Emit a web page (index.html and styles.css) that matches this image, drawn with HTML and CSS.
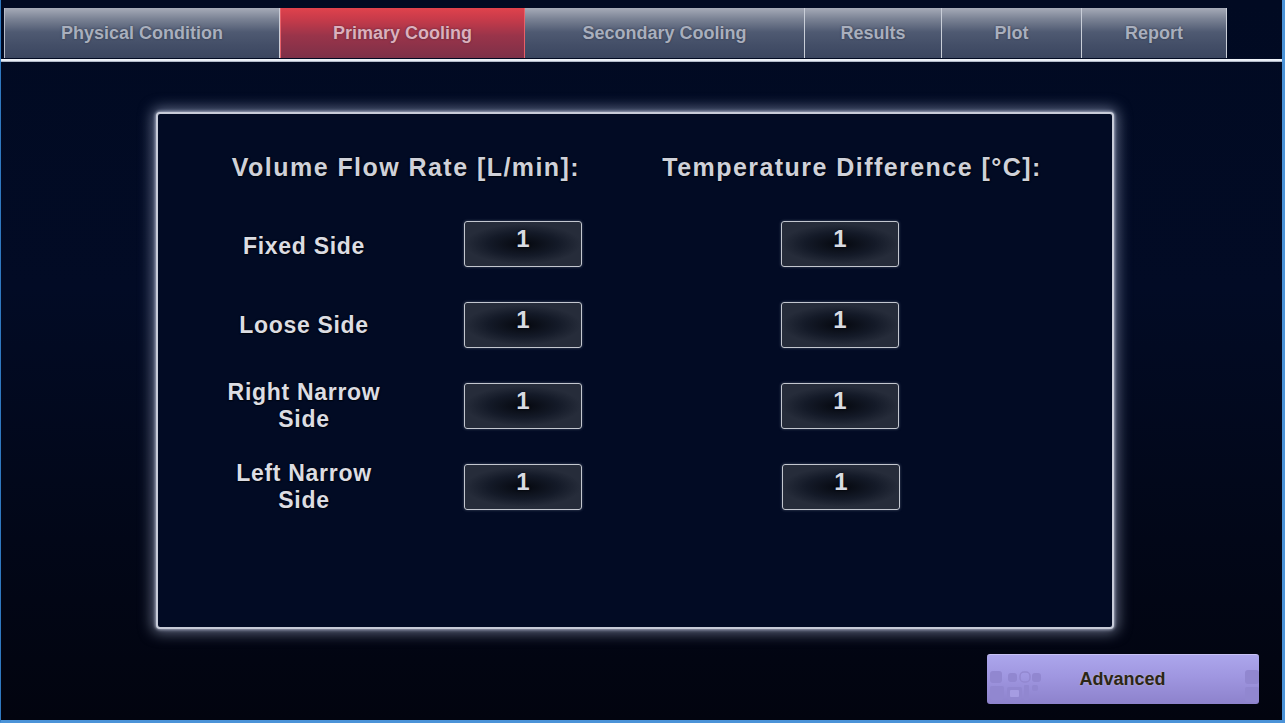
FILE: index.html
```html
<!DOCTYPE html>
<html>
<head>
<meta charset="utf-8">
<link rel="stylesheet" href="styles.css">
</head>
<body>
<div class="app">
  <nav class="tabs">
    <div class="tab w1">Physical Condition</div>
    <div class="tab active w2">Primary Cooling</div>
    <div class="tab w3">Secondary Cooling</div>
    <div class="tab w4">Results</div>
    <div class="tab w5">Plot</div>
    <div class="tab w6">Report</div>
  </nav>
  <div class="rule"></div>
  <main class="content">
    <section class="panel">
      <div class="grid">
        <h2 class="head h-flow">Volume Flow Rate [L/min]:</h2>
        <h2 class="head h-temp">Temperature Difference [°C]:</h2>

        <div class="label first">Fixed Side</div>
        <div class="box">1</div>
        <div class="box c3">1</div>

        <div class="label">Loose Side</div>
        <div class="box">1</div>
        <div class="box c3">1</div>

        <div class="label">Right Narrow<br>Side</div>
        <div class="box">1</div>
        <div class="box c3">1</div>

        <div class="label">Left Narrow<br>Side</div>
        <div class="box">1</div>
        <div class="box c3 nudge">1</div>
      </div>
    </section>
    <div class="actions">
      <button class="advanced">
        <svg class="deco-l" width="56" height="34" viewBox="0 0 56 34">
          <rect x="2" y="2" width="12" height="12" rx="3" />
          <rect x="20" y="4" width="9" height="9" rx="3" />
          <rect x="32" y="3" width="10" height="10" rx="4" fill="none" stroke="#9388d0" stroke-width="1.5"/>
          <rect x="44" y="4" width="9" height="9" rx="3" />
          <rect x="2" y="17" width="14" height="14" rx="2" />
          <rect x="19" y="18" width="15" height="13" rx="2" />
          <rect x="22" y="21" width="9" height="7" rx="1" fill="#a59ce2"/>
          <rect x="36" y="16" width="5" height="15" rx="1" />
          <rect x="44" y="16" width="6" height="6" rx="2" />
        </svg>
        <span class="adv-text">Advanced</span>
        <svg class="deco-r" width="14" height="34" viewBox="0 0 14 34">
          <rect x="0" y="1" width="14" height="14" rx="3" />
          <rect x="0" y="18" width="14" height="15" rx="2" />
        </svg>
      </button>
    </div>
  </main>
</div>
</body>
</html>
```
FILE: styles.css
```css
* { box-sizing: border-box; }
html, body { margin: 0; padding: 0; }
body {
  width: 1285px;
  height: 723px;
  overflow: hidden;
  font-family: "Liberation Sans", Arial, sans-serif;
}
.app {
  width: 1285px;
  height: 723px;
  border-left: 1px solid #2f78c0;
  border-right: 3px solid #4b93d8;
  border-bottom: 3px solid #4b93d8;
  background: linear-gradient(180deg, #010a22 0%, #020b25 40%, #020718 75%, #02040f 100%);
  display: flex;
  flex-direction: column;
}
.tabs {
  display: flex;
  padding: 8px 0 0 3px;
  height: 59px;
}
.tab {
  height: 50px;
  display: flex;
  align-items: center;
  justify-content: center;
  font-weight: bold;
  font-size: 18px;
  color: #a9afbd;
  background: linear-gradient(180deg, #a6abb8 0%, #7a8294 22%, #4f5a72 48%, #434e67 75%, #3b4660 100%);
  border-right: 1px solid #c9ced8;
  text-shadow: 0 0 2px rgba(20,25,40,0.6);
}
.tab.active {
  color: #dcb0bd;
  background: linear-gradient(180deg, #e0424c 0%, #c43a4a 25%, #9a344a 55%, #7d3048 100%);
  border-left: 1px solid #e86068;
  border-right: 1px solid #e86068;
}
.w1 { width: 276px; border-left: 1px solid #b8bcc8; }
.w2 { width: 245px; }
.w3 { width: 280px; }
.w4 { width: 137px; }
.w5 { width: 140px; }
.w6 { width: 145px; }
.rule {
  height: 3px;
  background: linear-gradient(180deg, #f4f7fc 0%, #e4e9f2 66%, #7f8aa0 100%);
}
.content {
  flex: 1;
  display: flex;
  flex-direction: column;
}
.panel {
  margin: 50px 0 0 155px;
  width: 958px;
  height: 517px;
  border: 2px solid #c7cbd8;
  border-radius: 4px;
  background: #020b24;
  box-shadow: 0 0 14px 4px rgba(190, 200, 230, 0.5), 0 0 3px 1px rgba(220,225,240,0.6);
}
.grid {
  display: grid;
  grid-template-columns: 66px 160px 80px 118px 199px 118px 24px;
  grid-template-rows: 33px repeat(4, 46px);
  row-gap: 35px;
  padding-top: 39px;
  align-items: center;
}
.head {
  margin: 0;
  align-self: start;
  font-size: 25px;
  font-weight: bold;
  letter-spacing: 1.45px;
  color: #cfd1d9;
  text-align: center;
  white-space: nowrap;
  line-height: 28px;
  text-shadow: 0 0 2px rgba(0,0,0,0.8), 0 1px 1px rgba(0,0,0,0.6);
}
.h-flow { grid-column: 2 / 5; grid-row: 1; transform: translateX(3px); }
.h-temp { grid-column: 6 / 8; grid-row: 1; justify-self: center; }
.label {
  grid-column: 2;
  text-align: center;
  font-size: 23px;
  font-weight: bold;
  letter-spacing: 0.7px;
  line-height: 27px;
  color: #dcdde3;
  text-shadow: 0 0 2px rgba(0,0,0,0.8), 0 1px 1px rgba(0,0,0,0.6);
}
.label.first { padding-top: 4px; }
.box {
  grid-column: 4;
  height: 46px;
  border: 1px solid #c3c7cf;
  border-radius: 3px;
  background: radial-gradient(ellipse 50% 45% at 50% 50%, #05080f 0%, #141a28 60%, #262c3a 100%);
  box-shadow: 0 0 3px rgba(200,205,220,0.35);
  text-align: center;
  font-size: 24px;
  font-weight: bold;
  color: #d8dbe3;
  line-height: 26px;
  padding-top: 4px;
  text-shadow: 0 0 2px rgba(0,0,0,0.9);
}
.box.c3 { grid-column: 6; }
.box.nudge { transform: translateX(1px); }
.actions {
  display: flex;
  justify-content: flex-end;
  padding: 25px 23px 0 0;
}
.advanced {
  position: relative;
  width: 272px;
  height: 50px;
  border: none;
  border-radius: 3px;
  padding: 0;
  background: linear-gradient(180deg, #aca6ec 0%, #9f96e0 45%, #8d82cc 100%);
  border-top: 1px solid #c8c2f4;
  display: flex;
  align-items: center;
  justify-content: center;
  font-family: "Liberation Sans", Arial, sans-serif;
  font-weight: bold;
  font-size: 18px;
  color: #2c2616;
  text-shadow: 0 0 2px rgba(230,225,200,0.5);
}
.adv-text { padding-right: 1px; }
.advanced svg { fill: #9187d0; position: absolute; }
.deco-l { left: 1px; top: 14px; }
.deco-r { right: 0; top: 14px; }
```
